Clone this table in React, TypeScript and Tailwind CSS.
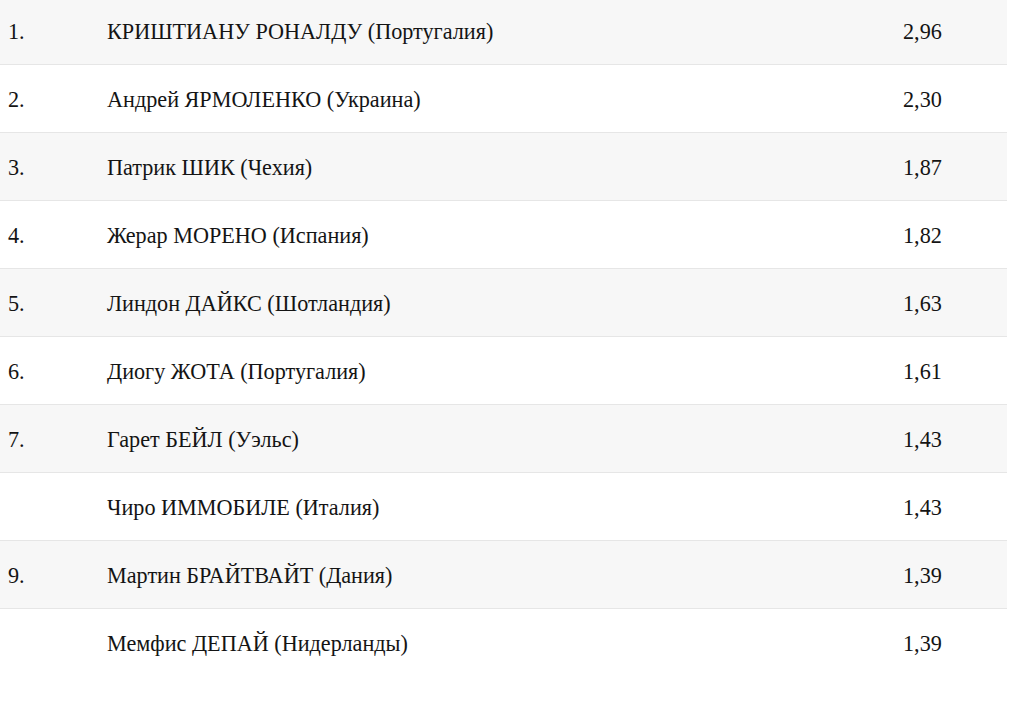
import React from "react";

const rows: [string, string, string][] = [
  ["1.", "КРИШТИАНУ РОНАЛДУ (Португалия)", "2,96"],
  ["2.", "Андрей ЯРМОЛЕНКО (Украина)", "2,30"],
  ["3.", "Патрик ШИК (Чехия)", "1,87"],
  ["4.", "Жерар МОРЕНО (Испания)", "1,82"],
  ["5.", "Линдон ДАЙКС (Шотландия)", "1,63"],
  ["6.", "Диогу ЖОТА (Португалия)", "1,61"],
  ["7.", "Гарет БЕЙЛ (Уэльс)", "1,43"],
  ["", "Чиро ИММОБИЛЕ (Италия)", "1,43"],
  ["9.", "Мартин БРАЙТВАЙТ (Дания)", "1,39"],
  ["", "Мемфис ДЕПАЙ (Нидерланды)", "1,39"],
];

export default function App() {
  return (
    <div className="w-[1022px] h-[714px] bg-white overflow-hidden">
      <div
        className="w-[1007px] mt-[-3px] text-[22.2px] text-[#141414]"
        style={{ fontFamily: '"Liberation Serif", "Times New Roman", serif' }}
      >
        {rows.map((r, i) => (
          <div
            key={i}
            className={`grid grid-cols-[107px_796px_1fr] items-center h-[68px] pt-[2px] ${
              i < rows.length - 1 ? "border-b border-[#e6e6e6]" : ""
            } ${i % 2 === 0 ? "bg-[#f7f7f7]" : "bg-white"}`}
          >
            <div className="pl-[8px]">{r[0]}</div>
            <div>{r[1]}</div>
            <div>{r[2]}</div>
          </div>
        ))}
      </div>
    </div>
  );
}
